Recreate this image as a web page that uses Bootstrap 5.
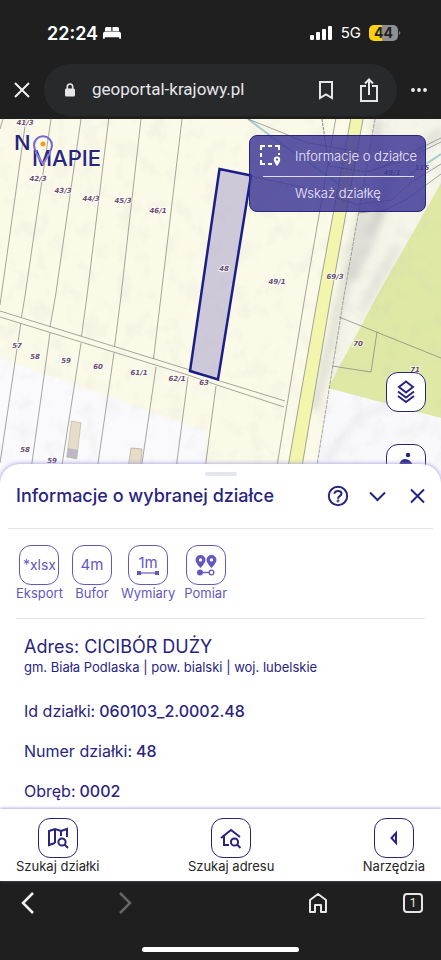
<!DOCTYPE html>
<html lang="pl">
<head>
<meta charset="utf-8">
<meta name="viewport" content="width=device-width, initial-scale=1">
<title>Geoportal krajowy – informacje o działce</title>
<link href="https://cdn.jsdelivr.net/npm/bootstrap@5.3.0/dist/css/bootstrap.min.css" rel="stylesheet">
<style>
  :root { --navy: #28247f; --violet: #6457c0; --chrome: #1f1f1f; }
  body { font-family: Inter, "Open Sans", sans-serif; background: var(--chrome); color: var(--navy); }
  svg { display: block; flex: none; }
  button, .plain-input { background: none; border: 0; padding: 0; color: inherit; }
  .chrome { background: var(--chrome); color: #e6e6e8; }
  .status { height: 64px; padding: 2px 40px 0 47px; color: #fff; }
  .clock { font-size: 18px; font-weight: 600; }
  .network { font-size: 15px; }
  .battery { width: 29px; height: 16px; border-radius: 5px; font-size: 14px; line-height: 16px; color: #1f1f1f;
    background: linear-gradient(90deg, #fbd20c 44%, #8f8f91 44%); }
  .address-row { padding: 0 13px 3px 12px; }
  .pill { height: 52px; border-radius: 26px; background: #28292b; padding: 0 17px 0 20px; margin: 0 13px 0 12px; }
  .plain-input { font-family: Roboto, sans-serif; font-size: 17px; min-width: 0; outline: 0; }
  .map-area { background: #fbfae9; min-height: 240px; }
  .map-lines { position: absolute; inset: 0; width: 100%; height: 100%; }
  .parcel-no { font: italic bold 7px "DejaVu Sans", sans-serif; fill: #6b4d6c; stroke: #fff; stroke-opacity: .7; stroke-width: 2px; paint-order: stroke; text-anchor: middle; }
  .logo { margin: 16px 0 0 12px; }
  .logo-type { font: 500 22px Inter, sans-serif; fill: var(--navy); }
  .map-tools { padding: 16px 15px 0 0; }
  .info-panel { width: 177px; border: 1px solid #28247f; border-radius: 8px; background: rgba(62, 56, 150, .84); color: #ece9fa; font-size: 13px; font-weight: 300; line-height: 19px; padding: 8px 8px 8px 9px; }
  .info-panel hr { width: 151px; margin: 8px auto 7px; border-color: #fff; opacity: .8; }
  .tile { width: 40px; height: 40px; border: 1px solid currentColor; border-radius: 12px; background: #fff; color: var(--navy); }
  .street-view { margin-top: 32px; }
  .sheet { margin-top: -20px; border-radius: 20px 20px 0 0; background: #fff; box-shadow: 0 0 5px #9b93dc; padding-bottom: 6px; }
  .grip { width: 32px; height: 4px; background: #e3e6ef; border-radius: 2px; margin: 8px auto 0; }
  .sheet-head { padding: 8px 12px 20px 16px; }
  .sheet-title { font-size: 18px; font-weight: 500; line-height: 24px; }
  .rule { margin: 0; border-color: #c9c9d4; opacity: .5; }
  .tools { padding: 16px 16px 17px; gap: 9px; color: var(--violet); font-size: 13px; line-height: 16px; }
  .tools .tile { color: var(--violet); font-size: 15px; }
  .tools .tile.narrow { font-size: 14px; }
  .details { padding: 16px 24px 0; }
  .address { font-size: 18px; line-height: 24px; font-weight: 400; }
  .region { font-size: 13px; line-height: 16px; }
  .fields { gap: 16px; font-size: 16px; line-height: 24px; padding-top: 24px; }
  .fields dt { font-weight: 400; }
  .fields dd { font-weight: 500; margin: 0; }
  .app-nav { background: #fff; color: #242424; font-size: 13px; line-height: 16px; padding: 9px 16px 7px; box-shadow: 0 -1px 3px #b3adea; }
  .toolbar { padding: 10px 18px 0 16px; gap: 73px; }
  .tab-count { width: 20px; height: 20px; border: 2px solid #e6e6e8; border-radius: 4px; font: 12px/16px Roboto, sans-serif; }
  .home-bar { width: 157px; height: 5px; border-radius: 3px; background: #fff; margin: 32px auto 8px; }
</style>
</head>
<body class="d-flex flex-column min-vh-100">

<header class="chrome">
  <div class="status d-flex align-items-center">
    <span class="clock">22:24</span>
    <svg class="ms-1" width="20" height="14" viewBox="0 0 20 14" fill="#fff"><path d="M3 5V2.500Q3 1 4.500 1H9.300V5ZM10.500 5V1H15.500Q17 1 17 2.500V5ZM1 12.800V8Q1 5.500 3.500 5.500H16.500Q19 5.500 19 8V12.800H17.200V11.300H2.800V12.800Z"/></svg>
    <svg class="ms-auto" width="23" height="14" viewBox="0 0 23 14" fill="#fff"><rect x="0" y="9" width="4" height="5" rx="1"/><rect x="6" y="6" width="4" height="8" rx="1"/><rect x="12" y="3" width="4" height="11" rx="1"/><rect x="18" y="0" width="4" height="14" rx="1"/></svg>
    <span class="network ms-2">5G</span>
    <span class="battery fw-bold text-center ms-2">44</span>
    <svg width="3" height="6" viewBox="0 0 3 6" fill="#777"><path d="M1 1Q4 3 1 5Z"/></svg>
  </div>
  <div class="address-row d-flex align-items-center">
    <button type="button" aria-label="Zamknij kartę"><svg width="20" height="20" viewBox="0 0 20 20" fill="none" stroke="#f0f0f0" stroke-width="2"><path d="M3 3 17 17M17 3 3 17"/></svg></button>
    <div class="pill flex-grow-1 d-flex align-items-center">
      <svg width="12" height="14" viewBox="0 0 12 14"><rect x="1" y="5.500" width="10" height="8" rx="1.500" fill="#e6e6e8"/><path d="M3.300 6V3.700a2.700 2.700 0 0 1 5.400 0V6" fill="none" stroke="#e6e6e8" stroke-width="1.600"/></svg>
      <input class="plain-input flex-grow-1 ms-3" type="text" value="geoportal-krajowy.pl" aria-label="Adres strony">
      <button type="button" aria-label="Dodaj zakładkę"><svg width="16" height="20" viewBox="0 0 16 20" fill="none" stroke="#e6e6e8" stroke-width="2"><path d="M2 2H14V18L8 14.500 2 18Z"/></svg></button>
      <button type="button" class="ms-4" aria-label="Udostępnij"><svg width="22" height="26" viewBox="0 0 22 26" fill="none" stroke="#e6e6e8" stroke-width="2"><path d="M8 9H3V24H19V9H14M11 18V3M7 6.500 11 2.500 15 6.500"/></svg></button>
    </div>
    <button type="button" aria-label="Więcej"><svg width="18" height="6" viewBox="0 0 18 6" fill="#f0f0f0"><circle cx="3" cy="3" r="1.900"/><circle cx="9" cy="3" r="1.900"/><circle cx="15" cy="3" r="1.900"/></svg></button>
  </div>
</header>

<main class="flex-grow-1 d-flex flex-column">
  <section class="map-area position-relative flex-grow-1 overflow-hidden d-flex justify-content-between" aria-label="Mapa działek">
    <svg class="map-lines" viewBox="0 119 441 365" preserveAspectRatio="xMidYMin slice">
      <defs>
        <filter id="relief" x="0" y="0" width="100%" height="100%"><feTurbulence type="fractalNoise" baseFrequency=".06 .05" numOctaves="3" seed="8"/><feColorMatrix values="0 0 0 0 .5  0 0 0 0 .5  0 0 0 0 .5  1.600 0 0 0 -.78"/></filter>
        <filter id="soft"><feGaussianBlur stdDeviation="4"/></filter>
      </defs>
      <rect y="119" width="441" height="365" fill="#fbfae9"/>
      <path d="M0 358 207 432 203 484H0Z" fill="#fafafc"/>
      <path d="M441 119V183L377 296 328 388 344 296 375 119Z" fill="#f6f5ea"/>
      <path d="M328 388 441 418V484H314Z" fill="#f9f9fb"/>
      <path d="M441 183 377 296 328 388 441 418Z" fill="#dfe9a5"/>
      <g filter="url(#soft)" fill="none" stroke="#8f8f92" stroke-opacity=".28">
        <path d="M368 190 341 300 314 410" stroke-width="9"/><path d="M376 119 382 210 352 280" stroke-width="9"/><path d="M441 130 395 175 365 235" stroke-width="7"/><path d="M330 460Q350 410 395 405" stroke-width="5" stroke-opacity=".15"/><path d="M398 245 362 310" stroke-width="9" stroke-opacity=".18"/>
      </g>
      <rect y="119" width="441" height="365" filter="url(#relief)" opacity=".2"/>
      <path d="M350.700 119H363L331 296 299 484H285L318 296Z" fill="#f2f6ac"/>
      <g fill="none" stroke="#a1cfd0" stroke-width="2"><path d="M248 119 280 143 305 160 340 185"/><path d="M405 178 441 154"/></g>
      <g fill="none" stroke="#80807a" stroke-width=".7">
        <path d="M3 119 0 129M26 119 0 305M51 119 25 296 21.500 317M81 119 55.500 296 50 327M108.700 119 87 296 81.500 336M141 119 121 296 114.500 347M182 119 161 296 153.500 359"/>
        <path d="M0 311 190 370 220 381 285 401M0 317 188 375 220 386 284 407"/>
        <path d="M20.700 324 0 463M50 333 29 484M81 343 59 484M114 353 95 484M156 367 139 484M188 377 174 484M216 386 203 484"/>
        <path d="M335.700 119 305 296 274 484M350.700 119 318 296 285 484M363 119 331 296 299 484"/>
        <path d="M375 119 344 296 314 484" stroke-dasharray="4 1"/>
        <path d="M322 119 329 166 366 172" stroke-dasharray="3 1" stroke-width="1"/>
        <path d="M339 317 441 358M377 332 371 372 332 366"/>
        <path d="M248 119 308 143 360 152M251 176 310 189 358 205M358 213 385 210 407 199 441 174M358 204 392 200 410 183 441 164M366 172 400 162 441 142M375 170 441 138"/>
      </g>
      <path d="M71.500 421 81 422.700 76.700 459 66.700 457Z" fill="#e6dcc8" stroke="#b8ada0" stroke-width=".6"/>
      <path d="M68 448 78 450 76.700 459 66.700 457Z" fill="#bdb7c4"/>
      <path d="M131 448 142 449 140 475H127Z" fill="#e6dcc8" stroke="#a59c96" stroke-width=".6"/>
      <path d="M219.500 169 251 175.500 218 379.500 190 371Z" fill="#9c94c8" fill-opacity=".48" stroke="#1d1d88" stroke-width="2.500"/>
      <g class="parcel-no">
        <text x="25" y="125">41/3</text><text x="38" y="181">42/3</text><text x="63" y="193">43/3</text><text x="91" y="201">44/3</text><text x="123" y="203">45/3</text><text x="158" y="213">46/1</text>
        <text x="224" y="271">48</text><text x="277" y="284">49/1</text><text x="335" y="279">69/3</text><text x="392" y="175">48/1</text><text x="422" y="170">115</text>
        <text x="17" y="348">57</text><text x="35" y="359">58</text><text x="66" y="363">59</text><text x="98" y="369">60</text><text x="139" y="375">61/1</text><text x="177" y="381">62/1</text><text x="204" y="385">63</text>
        <text x="25" y="452">58</text><text x="52" y="463">59</text><text x="358" y="346">70</text><text x="415" y="372">71</text>
      </g>
    </svg>
    <svg class="logo position-relative" width="96" height="36" viewBox="0 0 96 36" role="img" aria-label="NOMAPIE">
      <text class="logo-type" x="2" y="15">N</text>
      <text class="logo-type" x="20" y="31">MAPIE</text>
      <path d="M25 17A9 9 0 1 1 37 17" fill="none" stroke="#7669d2" stroke-width="2"/>
      <path d="M23.500 17 31 29 38.500 17" fill="none" stroke="#8b80df" stroke-width="2"/>
      <circle cx="31" cy="9" r="2.500" fill="#f29b1d"/>
    </svg>
    <div class="map-tools position-relative d-flex flex-column align-items-end">
      <div class="info-panel">
        <div class="d-flex align-items-center justify-content-between">
          <svg width="24" height="24" viewBox="0 0 24 24" fill="none" stroke="#fff" stroke-width="2"><path d="M2 6V2H6M9 2H13M16 2H20V6M2 9V13M2 16V20H6M9 20H13M20 9V11"/><path d="M18 12.500a3.200 3.200 0 0 1 3.200 3.200c0 2.200-3.200 6.300-3.200 6.300s-3.200-4.100-3.200-6.300a3.200 3.200 0 0 1 3.200-3.200Z" fill="#fff" stroke="none"/><circle cx="18" cy="15.600" r="1.100" fill="#4d4799" stroke="none"/></svg>
          <span>Informacje o działce</span>
        </div>
        <hr>
        <div class="text-center">Wskaż działkę</div>
      </div>
      <button type="button" class="tile d-flex align-items-center justify-content-center mt-auto" aria-label="Warstwy"><svg width="22" height="24" viewBox="0 0 22 24" fill="none" stroke="#28247f" stroke-width="2"><path d="M11 1.500 18 7 11 12.500 4 7ZM3 11.500 11 17.500 19 11.500M3 16 11 22 19 16"/></svg></button>
      <button type="button" class="tile street-view d-flex justify-content-center pt-2" aria-label="Widok ulicy"><svg width="22" height="24" viewBox="0 0 22 24" fill="#28247f"><circle cx="13" cy="2" r="2.200"/><path d="M4 13Q5 6 10 6Q15 6 18 12L15 13 12 11 13 20H8L7 12Z"/></svg></button>
    </div>
  </section>

  <section class="sheet position-relative" aria-labelledby="sheet-title">
    <div class="d-flex"><div class="grip"></div></div>
    <div class="sheet-head d-flex align-items-center">
      <h1 class="sheet-title mb-0 me-auto" id="sheet-title">Informacje o wybranej działce</h1>
      <button type="button" aria-label="Pomoc"><svg width="22" height="22" viewBox="0 0 22 22" fill="none" stroke="#28247f" stroke-width="2"><circle cx="11" cy="11" r="9.200"/><path d="M7.500 8.700C7.500 4.900 14.500 5 14.500 8.800C14.500 11.300 11 11.100 11 13.700"/><circle cx="11" cy="16" r=".4"/></svg></button>
      <button type="button" class="ms-3" aria-label="Zwiń"><svg width="24" height="24" viewBox="0 0 24 24" fill="none" stroke="#28247f" stroke-width="2"><path d="M5 8.500 12.500 16 20 8.500"/></svg></button>
      <button type="button" class="ms-3" aria-label="Zamknij"><svg width="24" height="24" viewBox="0 0 24 24" fill="none" stroke="#28247f" stroke-width="2"><path d="M6 5.500 19 18.500M19 5.500 6 18.500"/></svg></button>
    </div>
    <hr class="rule mx-2">
    <div class="tools d-flex">
      <label class="d-flex flex-column align-items-center"><button type="button" class="tile narrow">*xlsx</button>Eksport</label>
      <label class="d-flex flex-column align-items-center"><button type="button" class="tile">4m</button>Bufor</label>
      <label class="d-flex flex-column align-items-center"><button type="button" class="tile d-flex flex-column align-items-center justify-content-center">1m<svg width="22" height="4" viewBox="0 0 22 4" fill="currentColor"><path d="M1 1.400H21V2.600H1Z"/><rect width="4" height="4"/><rect x="18" width="4" height="4"/></svg></button>Wymiary</label>
      <label class="d-flex flex-column align-items-center"><button type="button" class="tile d-flex align-items-center justify-content-center"><svg width="24" height="24" viewBox="0 0 24 24" fill="currentColor"><path fill-rule="evenodd" d="M6.500 2a5 5 0 0 1 5 5C11.500 10 6.500 15 6.500 15S1.500 10 1.500 7a5 5 0 0 1 5-5ZM6.500 5.200a1.700 1.700 0 1 0 0 3.400 1.700 1.700 0 0 0 0-3.400ZM17.500 2a5 5 0 0 1 5 5c0 3-5 8-5 8s-5-5-5-8a5 5 0 0 1 5-5ZM17.500 5.200a1.700 1.700 0 1 0 0 3.400 1.700 1.700 0 0 0 0-3.400Z"/><circle cx="6" cy="19.500" r="3"/><path d="M6 18.800H15V20.200H6Z"/><circle cx="17.500" cy="19.500" r="2.300" fill="#fff" stroke="currentColor" stroke-width="1.300"/></svg></button>Pomiar</label>
    </div>
    <hr class="rule mx-3">
    <div class="details">
      <h2 class="address mb-0">Adres: CICIBÓR DUŻY</h2>
      <p class="region mb-0">gm. Biała Podlaska | pow. bialski | woj. lubelskie</p>
      <dl class="fields d-flex flex-column mb-0">
        <div class="d-flex gap-1"><dt>Id działki:</dt><dd>060103_2.0002.48</dd></div>
        <div class="d-flex gap-1"><dt>Numer działki:</dt><dd>48</dd></div>
        <div class="d-flex gap-1"><dt>Obręb:</dt><dd>0002</dd></div>
      </dl>
    </div>
  </section>
</main>

<nav class="app-nav position-relative d-flex justify-content-between">
  <button type="button" class="d-flex flex-column align-items-center"><span class="tile d-flex align-items-center justify-content-center"><svg width="22" height="22" viewBox="0 0 22 22" fill="none" stroke="#28247f" stroke-width="2"><path d="M20 10V2L14 4 8 2 2 4V18L8 16M8 2V16M14 4V9"/><circle cx="15" cy="15" r="3.600"/><path d="M17.500 17.500 21 21"/></svg></span>Szukaj działki</button>
  <button type="button" class="d-flex flex-column align-items-center"><span class="tile d-flex align-items-center justify-content-center"><svg width="22" height="22" viewBox="0 0 22 22" fill="none" stroke="#28247f" stroke-width="2"><path d="M1 11 11 3 20 10M4 9V18H9"/><circle cx="14.500" cy="15" r="3.600"/><path d="M17 17.500 20.500 21"/></svg></span>Szukaj adresu</button>
  <button type="button" class="d-flex flex-column align-items-center"><span class="tile d-flex align-items-center justify-content-center"><svg width="22" height="22" viewBox="0 0 22 22" fill="none" stroke="#28247f" stroke-width="2"><path d="M13 6V16L8.500 11Z"/></svg></span>Narzędzia</button>
</nav>

<footer class="chrome">
  <div class="toolbar d-flex align-items-center">
    <button type="button" aria-label="Wstecz"><svg width="24" height="24" viewBox="0 0 24 24" fill="none" stroke="#f0f0f0" stroke-width="2.500"><path d="M17 2 7 12 17 22"/></svg></button>
    <button type="button" class="me-auto" aria-label="Dalej"><svg width="24" height="24" viewBox="0 0 24 24" fill="none" stroke="#66666a" stroke-width="2.500"><path d="M7 2 17 12 7 22"/></svg></button>
    <button type="button" aria-label="Strona główna"><svg width="24" height="22" viewBox="0 0 24 22" fill="none" stroke="#e6e6e8" stroke-width="2"><path d="M4 8 12 2 20 8V20H15V13H9V20H4Z" stroke-linejoin="round"/></svg></button>
    <button type="button" class="tab-count" aria-label="Karty">1</button>
  </div>
  <div class="home-bar"></div>
</footer>

<script src="https://cdn.jsdelivr.net/npm/bootstrap@5.3.0/dist/js/bootstrap.bundle.min.js"></script>
</body>
</html>
